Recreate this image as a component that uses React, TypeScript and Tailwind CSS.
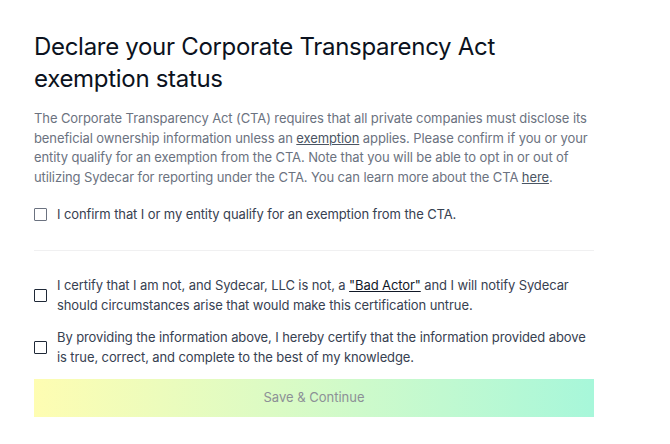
import React from "react";

export default function App() {
  return (
    <div className="min-h-[444px] w-[670px] bg-white" style={{ fontFamily: "Inter, 'Noto Sans', sans-serif" }}>
      <div className="w-[560px] ml-[34px] pt-[31px]">
        <h1 className="text-[24px] leading-[32px] text-[#0b1220] font-normal tracking-[-0.3px]">
          Declare your Corporate Transparency Act exemption status
        </h1>
        <p className="mt-[14px] text-[13px] leading-[19.5px] tracking-[-0.1px] text-[#6b7280]">
          The Corporate Transparency Act (CTA) requires that all private companies must disclose its
          beneficial ownership information unless an <span className="underline text-[#4b5563]">exemption</span> applies.
          Please confirm if you or your entity qualify for an exemption from the CTA. Note that you will be able to opt
          in or out of utilizing Sydecar for reporting under the CTA. You can learn more about the CTA{" "}
          <span className="underline text-[#4b5563]">here</span>.
        </p>
        <label className="mt-[17px] flex items-center gap-[10px] text-[13px] leading-[20px] tracking-[-0.1px] text-[#374151]">
          <span className="w-[13px] h-[13px] border border-[#6b7280] rounded-[1px] shrink-0 bg-white" />
          <span>I confirm that I or my entity qualify for an exemption from the CTA.</span>
        </label>
        <div className="mt-[26px] h-px bg-[#f0f0f1]" />
        <label className="mt-[24px] flex items-center gap-[10px] text-[13px] leading-[20px] tracking-[-0.1px] text-[#374151]">
          <span className="w-[13px] h-[13px] border border-[#1f2937] rounded-[1px] shrink-0 bg-white" />
          <span>
            I certify that I am not, and Sydecar, LLC is not, a{" "}
            <span className="underline text-[#111827]">"Bad Actor"</span> and I will notify Sydecar should
            circumstances arise that would make this certification untrue.
          </span>
        </label>
        <label className="mt-[12px] flex items-center gap-[10px] text-[13px] leading-[20px] tracking-[-0.1px] text-[#374151]">
          <span className="w-[13px] h-[13px] border border-[#1f2937] rounded-[1px] shrink-0 bg-white" />
          <span>
            By providing the information above, I hereby certify that the information provided above is true,
            correct, and complete to the best of my knowledge.
          </span>
        </label>
        <button
          className="mt-[12px] w-full h-[38px] flex items-center justify-center text-[13px] text-[#8c9096] bg-gradient-to-r from-[#fefdb2] to-[#a7f7da]"
        >
          Save &amp; Continue
        </button>
      </div>
    </div>
  );
}
